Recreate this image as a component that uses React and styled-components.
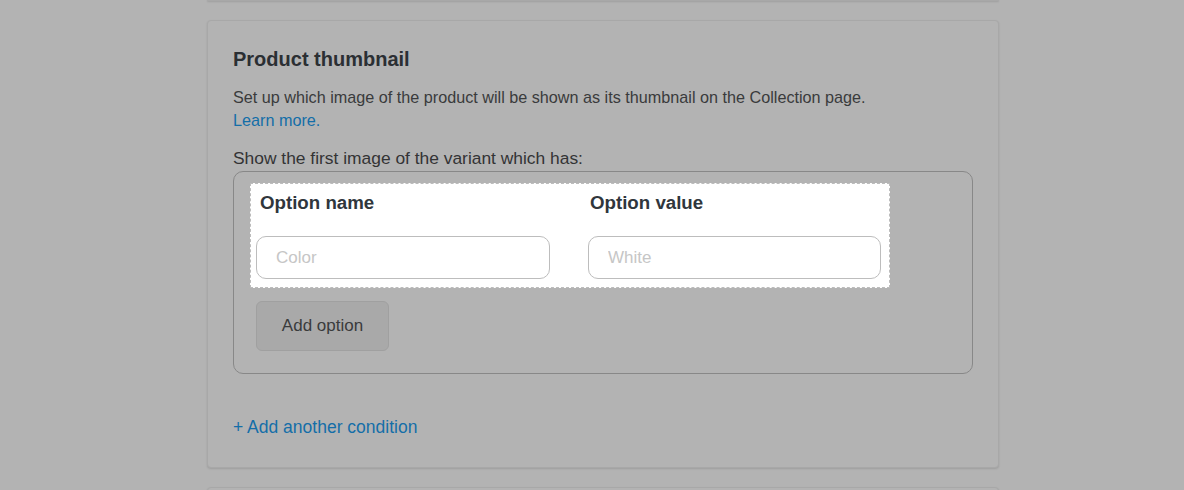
import React from "react";
import styled, { createGlobalStyle } from "styled-components";

const Global = createGlobalStyle`
  html, body { margin: 0; padding: 0; background: #b3b3b3; }
  body { font-family: "Liberation Sans", Arial, sans-serif; }
`;

const Page = styled.div`
  display: flex;
  flex-direction: column;
  gap: 19px;
  padding-left: 207px;
  width: 792px;
`;

const Card = styled.section`
  box-sizing: border-box;
  background: #b3b3b3;
  border: 1px solid #a8a8a8;
  border-radius: 4px;
  box-shadow: 0 1px 2px rgba(0, 0, 0, 0.12);
  padding: ${(p) => p.$pad || "0"};
  height: ${(p) => p.$h || "auto"};
  margin-top: ${(p) => p.$mt || "0"};
`;

const Title = styled.h2`
  margin: 0;
  font-size: 20px;
  line-height: 24px;
  font-weight: 700;
  color: #2b2f33;
`;

const Desc = styled.p`
  margin: 15px 0 0;
  font-size: 16.2px;
  line-height: 23px;
  color: #3a3b3c;
`;

const Link = styled.a`
  color: #146ea8;
  text-decoration: none;
  font-size: ${(p) => p.$size || "16.2px"};
`;

const Lead = styled.div`
  margin-top: 15px;
  font-size: 17.4px;
  line-height: 22px;
  color: #333435;
`;

const Group = styled.div`
  margin-top: 2px;
  width: 740px;
  box-sizing: border-box;
  border: 1px solid #888;
  border-radius: 10px;
  padding: 11px 16px 22px 16px;
  display: flex;
  flex-direction: column;
  align-items: flex-start;
  gap: 13px;
`;

const Row = styled.div`
  box-sizing: border-box;
  width: 640px;
  background: #fff;
  border: 1px dashed #bcbcbc;
  padding: 8px 8px 8px 5px;
  display: grid;
  grid-template-columns: 294px 293px;
  column-gap: 38px;
`;

const Field = styled.div`
  display: flex;
  flex-direction: column;
  gap: 22px;
`;

const Label = styled.label`
  padding-left: ${(p) => p.$indent || "4px"};
  font-size: 18.7px;
  line-height: 22px;
  font-weight: 700;
  color: #30363c;
`;

const Input = styled.input`
  box-sizing: border-box;
  width: 100%;
  height: 43px;
  border: 1px solid #bdbdbd;
  border-radius: 10px;
  padding: 0 19px;
  font-family: "Liberation Sans", Arial, sans-serif;
  font-size: 17px;
  color: #333;
  background: #fff;
  outline: none;
  &::placeholder { color: #c6c6c6; }
`;

const Button = styled.button`
  margin-left: 6px;
  box-sizing: border-box;
  width: 133px;
  height: 50px;
  background: #a9a9a9;
  border: 1px solid #a0a0a0;
  border-radius: 6px;
  font-family: "Liberation Sans", Arial, sans-serif;
  font-size: 17px;
  color: #3a3b3c;
  cursor: pointer;
`;

const Footer = styled.div`
  margin-top: 42px;
  line-height: 22px;
`;

export default function App() {
  return (
    <>
      <Global />
      <Page>
        <Card $h="1px" $mt="-1px" />
        <Card $pad="26px 25px 28px 25px">
          <Title>Product thumbnail</Title>
          <Desc>
            Set up which image of the product will be shown as its thumbnail on the Collection page.
            <br />
            <Link href="#">Learn more.</Link>
          </Desc>
          <Lead>Show the first image of the variant which has:</Lead>
          <Group>
            <Row>
              <Field>
                <Label>Option name</Label>
                <Input placeholder="Color" />
              </Field>
              <Field>
                <Label $indent="2px">Option value</Label>
                <Input placeholder="White" />
              </Field>
            </Row>
            <Button>Add option</Button>
          </Group>
          <Footer>
            <Link href="#" $size="17.5px">+ Add another condition</Link>
          </Footer>
        </Card>
        <Card $h="40px" />
      </Page>
    </>
  );
}
